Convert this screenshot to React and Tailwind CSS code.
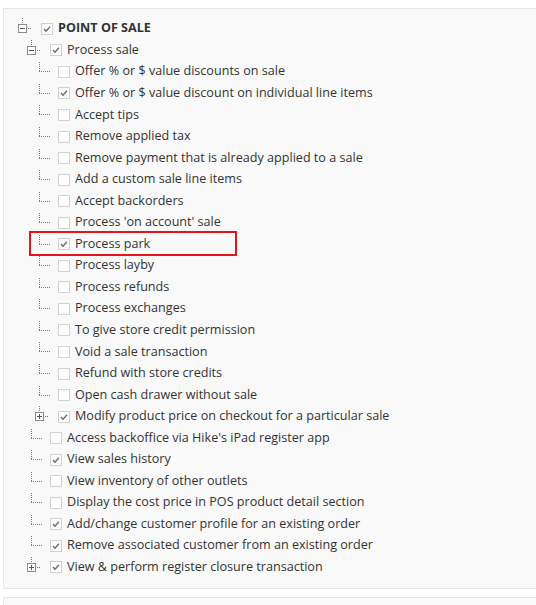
import React from 'react'

const rows = [
    {l: 0, t: 'POINT OF SALE', exp: 'minus', c: true, bold: true},
    {l: 1, t: 'Process sale', exp: 'minus', c: true},
    {l: 2, t: 'Offer % or $ value discounts on sale'},
    {l: 2, t: 'Offer % or $ value discount on individual line items', c: true},
    {l: 2, t: 'Accept tips'},
    {l: 2, t: 'Remove applied tax'},
    {l: 2, t: 'Remove payment that is already applied to a sale'},
    {l: 2, t: 'Add a custom sale line items'},
    {l: 2, t: 'Accept backorders'},
    {l: 2, t: "Process 'on account' sale"},
    {l: 2, t: 'Process park', c: true, mark: true},
    {l: 2, t: 'Process layby'},
    {l: 2, t: 'Process refunds'},
    {l: 2, t: 'Process exchanges'},
    {l: 2, t: 'To give store credit permission'},
    {l: 2, t: 'Void a sale transaction'},
    {l: 2, t: 'Refund with store credits'},
    {l: 2, t: 'Open cash drawer without sale'},
    {l: 2, t: 'Modify product price on checkout for a particular sale', exp: 'plus', c: true},
    {l: 1, t: "Access backoffice via Hike's iPad register app"},
    {l: 1, t: 'View sales history', c: true},
    {l: 1, t: 'View inventory of other outlets'},
    {l: 1, t: 'Display the cost price in POS product detail section'},
    {l: 1, t: 'Add/change customer profile for an existing order', c: true},
    {l: 1, t: 'Remove associated customer from an existing order', c: true},
    {l: 1, t: 'View & perform register closure transaction', exp: 'plus', c: true},
]

const indent = ['pl-[14px]', 'pl-[23px]', 'pl-[31px]']

// tree connector / expander drawing
const Lead = ({exp}) => {
    if (exp) {
        return (
            <svg width="23" height="21" className="shrink-0">
                <line x1="4.5" y1="0" x2="4.5" y2="6" stroke="#777" strokeDasharray="1 1"/>
                <rect x="0.5" y="6.5" width="8" height="8" fill="#fff" stroke="#8a8a8a"/>
                <line x1="2" y1="10.5" x2="7" y2="10.5" stroke="#555"/>
                {exp === 'plus' && <line x1="4.5" y1="8" x2="4.5" y2="13" stroke="#555"/>}
                <line x1="10" y1="10.5" x2="14" y2="10.5" stroke="#777" strokeDasharray="1 1"/>
            </svg>
        )
    }
    return (
        <svg width="23" height="21" className="shrink-0">
            <line x1="4.5" y1="1" x2="4.5" y2="10" stroke="#777" strokeDasharray="1 1"/>
            <line x1="4" y1="10.5" x2="16" y2="10.5" stroke="#777" strokeDasharray="1 1"/>
        </svg>
    )
}

const Check = ({on}) => (
    <span className="w-3 h-3 shrink-0 border border-[#d0d0d0] bg-white flex items-center justify-center">
        {on && (
            <svg width="10" height="10" viewBox="0 0 10 10">
                <polyline points="2,5 4,7.2 8,2.8" fill="none" stroke="#6b6b6b" strokeWidth="1.4"/>
            </svg>
        )}
    </span>
)

const App = () => {
    return (
        <div className="w-full overflow-hidden bg-white pb-4" style={{fontFamily: '"Open Sans", "Liberation Sans", sans-serif'}}>
            <div className="mt-2 ml-[3px] w-[560px] border border-[#e6e6e6] bg-[#f9f9f9] pt-[9px] pb-[10px]">
                {rows.map((r, i) => (
                    <div key={i} className={"relative flex items-center h-[21.56px] " + indent[r.l]}>
                        <Lead exp={r.exp}/>
                        <Check on={r.c}/>
                        <span className={"ml-[5px] text-[12.6px] text-[#333] whitespace-nowrap " + (r.bold ? "font-bold" : "")}>{r.t}</span>
                        {r.mark && (
                            <span className="absolute left-[25px] top-[-2px] w-[208px] h-[25px] border-2 border-[#e8141b]"></span>
                        )}
                    </div>
                ))}
            </div>
            <div className="mt-2 ml-[3px] w-[560px] h-10 border border-[#e6e6e6] bg-[#f9f9f9]"></div>
        </div>
    )
}

export default App
